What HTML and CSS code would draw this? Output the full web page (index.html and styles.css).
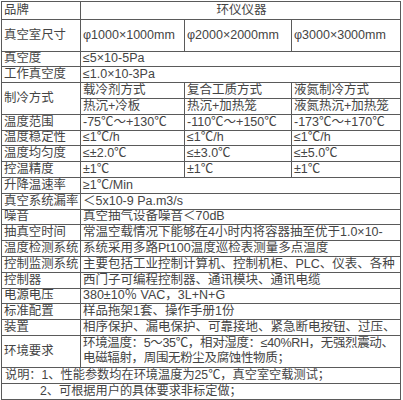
FILE: index.html
```html
<!DOCTYPE html>
<html lang="zh-CN">
<head>
<meta charset="utf-8">
<title>环仪仪器 参数表</title>
<link rel="stylesheet" href="styles.css">
</head>
<body>
<table class="spec">
  <colgroup>
    <col class="c-label">
    <col class="c-a">
    <col class="c-b">
    <col class="c-c">
  </colgroup>
  <tbody>
    <tr class="head"><td class="label">品牌</td><td colspan="3" class="center">环仪仪器</td></tr>
    <tr class="tall"><td class="label">真空室尺寸</td><td>φ1000×1000mm</td><td>φ2000×2000mm</td><td>φ3000×3000mm</td></tr>
    <tr><td class="label">真空度</td><td colspan="3">≤5×10-5Pa</td></tr>
    <tr><td class="label">工作真空度</td><td colspan="3">≤1.0×10-3Pa</td></tr>
    <tr><td class="label" rowspan="2">制冷方式</td><td>载冷剂方式</td><td>复合工质方式</td><td>液氮制冷方式</td></tr>
    <tr><td>热沉+冷板</td><td>热沉+加热笼</td><td>液氮热沉+加热笼</td></tr>
    <tr><td class="label">温度范围</td><td>-75℃～+130℃</td><td>-110℃～+150℃</td><td>-173℃～+170℃</td></tr>
    <tr><td class="label">温度稳定性</td><td>≤1℃/h</td><td>≤1℃/h</td><td>≤1℃/h</td></tr>
    <tr><td class="label">温度均匀度</td><td>≤±2.0℃</td><td>≤±3.0℃</td><td>≤±5.0℃</td></tr>
    <tr><td class="label">控温精度</td><td>±1℃</td><td>±1℃</td><td>±1℃</td></tr>
    <tr><td class="label">升降温速率</td><td colspan="3">≥1℃/Min</td></tr>
    <tr><td class="label">真空系统漏率</td><td colspan="3">＜5x10-9 Pa.m3/s</td></tr>
    <tr><td class="label">噪音</td><td colspan="3">真空抽气设备噪音＜70dB</td></tr>
    <tr><td class="label">抽真空时间</td><td colspan="3">常温空载情况下能够在4小时内将容器抽至优于1.0×10-</td></tr>
    <tr><td class="label">温度检测系统</td><td colspan="3">系统采用多路Pt100温度巡检表测量多点温度</td></tr>
    <tr><td class="label">控制监测系统</td><td colspan="3">主要包括工业控制计算机、控制机柜、PLC、仪表、各种</td></tr>
    <tr><td class="label">控制器</td><td colspan="3">西门子可编程控制器、通讯模块、通讯电缆</td></tr>
    <tr><td class="label">电源电压</td><td colspan="3">380±10％ VAC，3L+N+G</td></tr>
    <tr><td class="label">标准配置</td><td colspan="3">样品拖架1套、操作手册1份</td></tr>
    <tr><td class="label">装置</td><td colspan="3">相序保护、漏电保护、可靠接地、紧急断电按钮、过压、</td></tr>
    <tr class="tall"><td class="label">环境要求</td><td colspan="3" class="env">环境温度：5～35℃，相对湿度：≤40%RH，无强烈震动、<br>电磁辐射，周围无粉尘及腐蚀性物质；</td></tr>
    <tr><td colspan="4" class="note">说明：1、性能参数均在环境温度为25℃，真空室空载测试；</td></tr>
    <tr><td colspan="4" class="note indent">2、可根据用户的具体要求非标定做；</td></tr>
  </tbody>
</table>
</body>
</html>
```

FILE: styles.css
```css
html, body {
  margin: 0;
  padding: 0;
  background: #ffffff;
}

body {
  padding: 1px 0 0 1px;
}

.spec {
  border-collapse: collapse;
  table-layout: fixed;
  width: 400px;
  font-family: "Liberation Sans", "Noto Sans CJK SC", sans-serif;
  font-size: 12.5px;
  color: #444444;
}

.c-label { width: 79px; }
.c-a { width: 104px; }
.c-b { width: 107px; }
.c-c { width: 109px; }

.spec td {
  border: 1px solid #5a5a5a;
  padding: 0 0 0 2px;
  height: 14.8px;
  line-height: 13px;
  white-space: nowrap;
  overflow: hidden;
  vertical-align: middle;
}

.spec tr.head td {
  height: 17px;
}

.spec tr.tall td {
  height: 30.6px;
}

.spec tr.tall td.env {
  line-height: 15.5px;
  letter-spacing: -0.35px;
}

.spec td.label {
  font-size: 12.4px;
  padding-left: 2px;
}

.spec td.center {
  text-align: center;
}

.spec td.note {
  font-size: 12.2px;
  padding-left: 3px;
}

.spec td.indent {
  padding-left: 38px;
}
```
